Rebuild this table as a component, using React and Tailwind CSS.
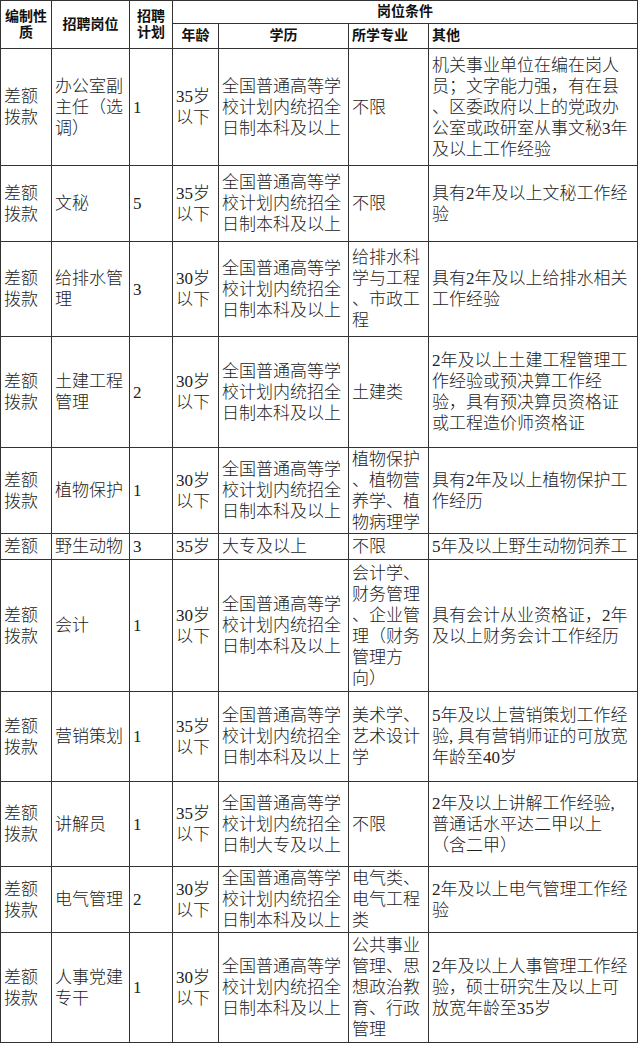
const rows = [
  {
    kind: ["差额", "拨款"],
    post: ["办公室副", "主任（选", "调）"],
    count: "1",
    age: ["35岁", "以下"],
    edu: ["全国普通高等学", "校计划内统招全", "日制本科及以上"],
    major: ["不限"],
    other: [
      "机关事业单位在编在岗人",
      "员；文字能力强，有在县",
      "、区委政府以上的党政办",
      "公室或政研室从事文秘3年",
      "及以上工作经验",
    ],
  },
  {
    kind: ["差额", "拨款"],
    post: ["文秘"],
    count: "5",
    age: ["35岁", "以下"],
    edu: ["全国普通高等学", "校计划内统招全", "日制本科及以上"],
    major: ["不限"],
    other: ["具有2年及以上文秘工作经", "验"],
  },
  {
    kind: ["差额", "拨款"],
    post: ["给排水管", "理"],
    count: "3",
    age: ["30岁", "以下"],
    edu: ["全国普通高等学", "校计划内统招全", "日制本科及以上"],
    major: ["给排水科", "学与工程", "、市政工", "程"],
    other: ["具有2年及以上给排水相关", "工作经验"],
  },
  {
    kind: ["差额", "拨款"],
    post: ["土建工程", "管理"],
    count: "2",
    age: ["30岁", "以下"],
    edu: ["全国普通高等学", "校计划内统招全", "日制本科及以上"],
    major: ["土建类"],
    other: [
      "2年及以上土建工程管理工",
      "作经验或预决算工作经",
      "验，具有预决算员资格证",
      "或工程造价师资格证",
    ],
  },
  {
    kind: ["差额", "拨款"],
    post: ["植物保护"],
    count: "1",
    age: ["30岁", "以下"],
    edu: ["全国普通高等学", "校计划内统招全", "日制本科及以上"],
    major: ["植物保护", "、植物营", "养学、植", "物病理学"],
    other: ["具有2年及以上植物保护工", "作经历"],
  },
  {
    kind: ["差额"],
    post: ["野生动物"],
    count: "3",
    age: ["35岁"],
    edu: ["大专及以上"],
    major: ["不限"],
    other: ["5年及以上野生动物饲养工"],
  },
  {
    kind: ["差额", "拨款"],
    post: ["会计"],
    count: "1",
    age: ["30岁", "以下"],
    edu: ["全国普通高等学", "校计划内统招全", "日制本科及以上"],
    major: ["会计学、", "财务管理", "、企业管", "理（财务", "管理方", "向）"],
    other: ["具有会计从业资格证，2年", "及以上财务会计工作经历"],
  },
  {
    kind: ["差额", "拨款"],
    post: ["营销策划"],
    count: "1",
    age: ["35岁", "以下"],
    edu: ["全国普通高等学", "校计划内统招全", "日制本科及以上"],
    major: ["美术学、", "艺术设计", "学"],
    other: ["5年及以上营销策划工作经", "验, 具有营销师证的可放宽", "年龄至40岁"],
  },
  {
    kind: ["差额", "拨款"],
    post: ["讲解员"],
    count: "1",
    age: ["35岁", "以下"],
    edu: ["全国普通高等学", "校计划内统招全", "日制大专及以上"],
    major: ["不限"],
    other: ["2年及以上讲解工作经验,", "普通话水平达二甲以上", "（含二甲）"],
  },
  {
    kind: ["差额", "拨款"],
    post: ["电气管理"],
    count: "2",
    age: ["30岁", "以下"],
    edu: ["全国普通高等学", "校计划内统招全", "日制本科及以上"],
    major: ["电气类、", "电气工程", "类"],
    other: ["2年及以上电气管理工作经", "验"],
  },
  {
    kind: ["差额", "拨款"],
    post: ["人事党建", "专干"],
    count: "1",
    age: ["30岁", "以下"],
    edu: ["全国普通高等学", "校计划内统招全", "日制本科及以上"],
    major: ["公共事业", "管理、思", "想政治教", "育、行政", "管理"],
    other: ["2年及以上人事管理工作经", "验，硕士研究生及以上可", "放宽年龄至35岁"],
  },
];

function Cell({ lines, className = "" }) {
  return (
    <div
      className={
        "flex items-center overflow-hidden border-r border-b border-[#333] pl-[3px] " +
        className
      }
    >
      <div>
        {lines.map((l, i) => (
          <div key={i} className="whitespace-nowrap">
            {l}
          </div>
        ))}
      </div>
    </div>
  );
}

function Head({ lines, className = "" }) {
  return (
    <div
      className={
        "flex flex-col justify-center overflow-hidden border-r border-b border-[#333] text-[14px] leading-[16px] font-bold text-[#111] " +
        className
      }
    >
      {lines.map((l, i) => (
        <div key={i} className="whitespace-nowrap">
          {l}
        </div>
      ))}
    </div>
  );
}

export default function App() {
  return (
    <div className="h-[1044px] w-[640px] overflow-hidden bg-white">
      <div
        className="grid w-[638px] grid-cols-[51px_78px_43px_46px_130px_80px_209px] grid-rows-[23px_25px_117px_76px_95px_111px_86px_26px_132px_90px_85px_66px_110px] border-l border-t border-[#333] text-[17px] leading-[21px] font-light text-[#222]"
        style={{ fontFamily: '"Liberation Serif", "Noto Sans CJK SC", serif' }}
      >
        <Head lines={["编制性", "质"]} className="row-span-2 items-center" />
        <Head lines={["招聘岗位"]} className="row-span-2 items-center" />
        <Head lines={["招聘", "计划"]} className="row-span-2 items-center" />
        <Head lines={["岗位条件"]} className="col-span-4 items-center" />
        <Head lines={["年龄"]} className="items-center" />
        <Head lines={["学历"]} className="items-center" />
        <Head lines={["所学专业"]} className="items-start pl-[3px]" />
        <Head lines={["其他"]} className="items-start pl-[3px]" />

        {rows.map((r, i) => (
          <div key={i} className="contents">
            <Cell lines={r.kind} />
            <Cell lines={r.post} />
            <Cell lines={[r.count]} />
            <Cell lines={r.age} />
            <Cell lines={r.edu} />
            <Cell lines={r.major} />
            <Cell lines={r.other} />
          </div>
        ))}
      </div>
    </div>
  );
}
